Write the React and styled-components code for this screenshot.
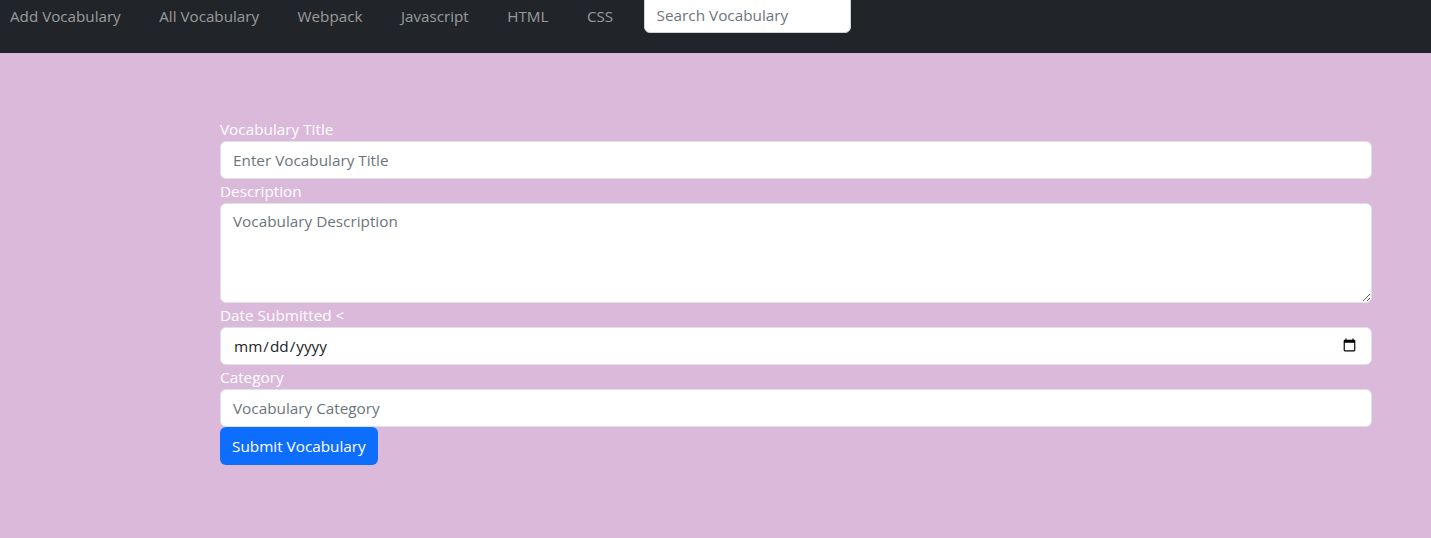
import React from 'react';
import styled, { createGlobalStyle } from 'styled-components';

const GlobalStyle = createGlobalStyle`
  * { box-sizing: border-box; }
  body {
    margin: 0;
    background: #dab9da;
    font-family: "Open Sans", "Noto Sans", sans-serif;
    font-size: 15.3px;
    line-height: 1.5;
    color: #212529;
  }
`;

const NavBar = styled.nav`
  height: 53px;
  background: #212529;
  display: flex;
  align-items: flex-start;
  padding-left: 10px;
  overflow: hidden;
`;

const NavLink = styled.a`
  color: rgba(255, 255, 255, 0.55);
  text-decoration: none;
  font-size: 15.2px;
  line-height: 33px;
  margin-right: 38.5px;
  cursor: pointer;
`;

const SearchInput = styled.input`
  margin-top: -5px;
  margin-left: -8px;
  width: 207px;
  height: 38px;
  padding: 7px 12px 5px;
  border: 1px solid #ced4da;
  border-radius: 6px;
  font: inherit;
  font-size: 15.3px;
  background: #fff;
  &::placeholder { color: #6c757d; }
`;

const Form = styled.form`
  width: 1152px;
  margin: 64px 0 0 220px;
  display: flex;
  flex-direction: column;
  align-items: flex-start;
`;

const Label = styled.label`
  display: block;
  height: 24px;
  padding-top: 1px;
  color: #fff;
  font-size: 15.3px;
  line-height: 23px;
`;

const Field = styled.input`
  width: 100%;
  height: 38px;
  padding: 6px 12px;
  border: 1px solid #dee2e6;
  border-radius: 6px;
  background: #fff;
  font: inherit;
  font-size: 15.3px;
  color: #212529;
  &::placeholder { color: #6c757d; }
`;

const Area = styled.textarea`
  width: 100%;
  height: 100px;
  padding: 6px 12px;
  border: 1px solid #dee2e6;
  border-radius: 6px;
  background: #fff;
  font: inherit;
  font-size: 15.3px;
  resize: vertical;
  &::placeholder { color: #6c757d; }
`;

const Button = styled.button`
  height: 38px;
  padding: 0 12px;
  border: none;
  border-radius: 6px;
  background: #0d6efd;
  color: #fff;
  font: inherit;
  font-size: 15.3px;
  cursor: pointer;
`;

const links = ['Add Vocabulary', 'All Vocabulary', 'Webpack', 'Javascript', 'HTML', 'CSS'];

const App = () => (
  <>
    <GlobalStyle />
    <NavBar>
      {links.map((l) => (
        <NavLink key={l}>{l}</NavLink>
      ))}
      <SearchInput placeholder="Search Vocabulary" />
    </NavBar>
    <Form onSubmit={(e) => e.preventDefault()}>
      <Label>Vocabulary Title</Label>
      <Field placeholder="Enter Vocabulary Title" />
      <Label>Description</Label>
      <Area placeholder="Vocabulary Description" />
      <Label>Date Submitted &lt;</Label>
      <Field type="date" />
      <Label>Category</Label>
      <Field placeholder="Vocabulary Category" />
      <Button type="submit">Submit Vocabulary</Button>
    </Form>
  </>
);

export default App;
